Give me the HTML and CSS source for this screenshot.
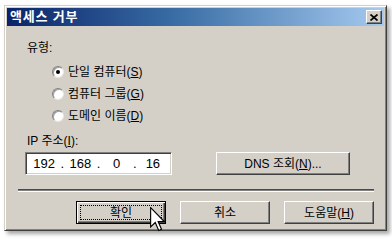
FILE: index.html
```html
<!DOCTYPE html>
<html lang="ko">
<head>
<meta charset="utf-8">
<link rel="stylesheet" href="styles.css">
</head>
<body>
<div class="dialog">
  <div class="titlebar">
    <span class="title">액세스 거부</span>
    <span class="close"><svg width="8" height="7" viewBox="0 0 8 7"><path d="M0.5 0.5 L7.5 6.5 M7.5 0.5 L0.5 6.5" stroke="#000" stroke-width="1.7"/></svg></span>
  </div>
  <div class="content">
    <div class="label">유형:</div>
    <div class="radios">
      <div class="radio"><span class="dot"><span class="pip"></span></span><span>단일 컴퓨터(<u>S</u>)</span></div>
      <div class="radio"><span class="dot"></span><span>컴퓨터 그룹(<u>G</u>)</span></div>
      <div class="radio"><span class="dot"></span><span>도메인 이름(<u>D</u>)</span></div>
    </div>
    <div class="label ip-label">IP 주소(<u>I</u>):</div>
    <div class="iprow">
      <div class="ipbox">
        <span class="field">192</span><span class="sepdot">.</span>
        <span class="field">168</span><span class="sepdot">.</span>
        <span class="field">0</span><span class="sepdot">.</span>
        <span class="field">16</span>
      </div>
      <div class="btn dns"><span>DNS 조회(<u>N</u>)...</span></div>
    </div>
    <div class="separator"></div>
    <div class="buttons">
      <div class="btn default"><span class="focus">확인</span></div>
      <div class="btn"><span>취소</span></div>
      <div class="btn"><span>도움말(<u>H</u>)</span></div>
    </div>
  </div>
</div>
<svg class="cursor" width="16" height="25" viewBox="0 0 12.8 20">
  <path d="M0.5 0.5 L0.5 16 L4.2 12.4 L7 18.8 L9.2 17.8 L6.5 11.6 L11.4 11.6 Z" fill="#fff" stroke="#000" stroke-width="0.9" stroke-linejoin="miter"/>
</svg>
</body>
</html>
```
FILE: styles.css
```css
html, body {
  margin: 0;
  padding: 0;
  background: #ffffff;
}
body {
  width: 392px;
  height: 240px;
  overflow: hidden;
  font-family: "Liberation Sans", "Noto Sans CJK KR", sans-serif;
  font-size: 12px;
  color: #000;
}
.dialog {
  margin: 5px 0 0 4px;
  width: 383px;
  height: 226px;
  box-sizing: border-box;
  background: #d4d0c8;
  border: 1px solid;
  border-color: #d4d0c8 #404040 #404040 #d4d0c8;
  box-shadow: inset 1px 1px #ffffff, inset -1px -1px #808080, 3px 3px 4px rgba(0,0,0,0.35);
  padding: 2px;
  display: flex;
  flex-direction: column;
}
.titlebar {
  height: 18px;
  background: linear-gradient(to right, #0a246a 0%, #3a6ea5 45%, #a6caf0 100%);
  display: flex;
  align-items: center;
  justify-content: space-between;
  padding: 0 2px 0 3px;
}
.title {
  color: #fff;
  font-weight: bold;
  font-size: 13px;
  letter-spacing: 0.8px;
  line-height: 18px;
}
.close {
  width: 16px;
  height: 14px;
  box-sizing: border-box;
  background: #d4d0c8;
  border: 1px solid;
  border-color: #ffffff #404040 #404040 #ffffff;
  box-shadow: inset -1px -1px #808080;
  display: flex;
  align-items: center;
  justify-content: center;
}
.close svg { display: block; }
.content {
  flex: 1;
  padding: 0 10px 0 11px;
  display: flex;
  flex-direction: column;
}
.label {
  line-height: 16px;
  height: 16px;
  margin: 14px 0 0 9px;
}
.ip-label {
  margin-top: 9px;
}
.radios {
  display: flex;
  flex-direction: column;
  gap: 6px;
  margin: 8px 0 0 34px;
}
.radio {
  height: 16px;
  line-height: 16px;
  display: flex;
  align-items: center;
  gap: 4px;
}
.dot {
  width: 12px;
  height: 12px;
  box-sizing: border-box;
  border-radius: 50%;
  background: #fff;
  border: 1px solid;
  border-color: #808080 #e8e6e0 #e8e6e0 #808080;
  box-shadow: inset 1px 1px #a0a0a0;
  display: flex;
  align-items: center;
  justify-content: center;
}
.pip {
  width: 4px;
  height: 4px;
  border-radius: 50%;
  background: #000;
}
.iprow {
  display: flex;
  align-items: center;
  margin-top: 3px;
  height: 23px;
}
.ipbox {
  margin-left: 7px;
  width: 147px;
  height: 23px;
  box-sizing: border-box;
  background: #fff;
  border: 1px solid;
  border-color: #808080 #ffffff #ffffff #808080;
  box-shadow: inset 1px 1px #404040, inset -1px -1px #d4d0c8;
  display: flex;
  align-items: center;
  padding: 0 2px;
  font-size: 13px;
}
.field {
  flex: 1;
  text-align: center;
}
.sepdot {
  width: 4px;
  text-align: center;
}
.btn {
  width: 90px;
  height: 23px;
  box-sizing: border-box;
  background: #d4d0c8;
  border: 1px solid;
  border-color: #ffffff #404040 #404040 #ffffff;
  box-shadow: inset -1px -1px #808080;
  display: flex;
  align-items: center;
  justify-content: center;
  line-height: 16px;
}
.dns {
  width: 134px;
  margin-left: 44px;
}
.separator {
  margin-top: 14px;
  height: 1px;
  background: #4a4a4a;
  border-bottom: 1px solid #808080;
  box-shadow: 0 1px #ffffff;
}
.buttons {
  display: flex;
  justify-content: flex-end;
  gap: 14px;
  margin-top: 10px;
}
.btn.default {
  border: 1px solid #000;
  box-shadow: inset 1px 1px #ffffff, inset -1px -1px #404040, inset -2px -2px #808080;
  padding: 3px;
}
.focus {
  flex: 1;
  align-self: stretch;
  border: 1px dotted #000;
  display: flex;
  align-items: center;
  justify-content: center;
}
.cursor {
  position: absolute;
  left: 150px;
  top: 207px;
}
```
